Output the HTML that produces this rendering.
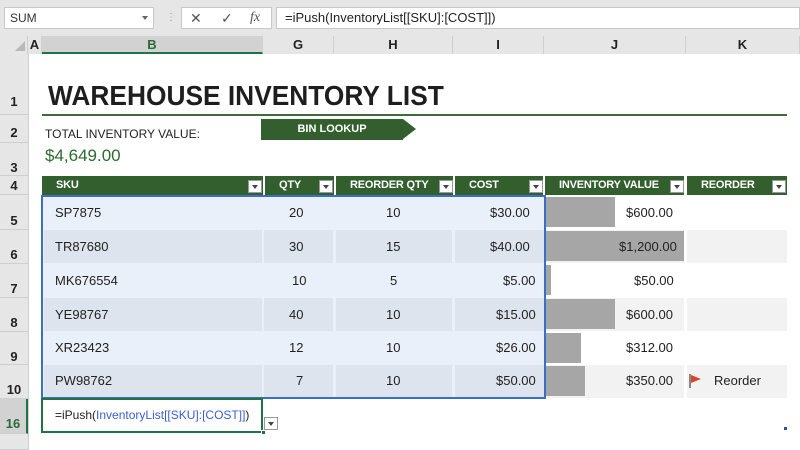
<!DOCTYPE html><html><head><style>
*{margin:0;padding:0;box-sizing:border-box}
body{width:800px;height:450px;overflow:hidden;background:#fff;font-family:"Liberation Sans",Arial,sans-serif;position:relative}
div{position:absolute}
.t{font-size:13px;color:#222;line-height:34px;white-space:nowrap}
.rh{left:0;width:28px;background:#e6e6e6;border-bottom:1px solid #cfcfcf;font-size:13px;color:#222;text-align:center;font-weight:bold}
.ch{top:36px;height:18px;background:#e6e6e6;border-right:1px solid #cfcfcf;font-size:13px;font-weight:bold;color:#222;text-align:center;line-height:18px}
.hd{top:176px;height:19px;background:#335f2e;color:#fff;font-size:11px;letter-spacing:-0.2px;font-weight:bold;line-height:19px;padding-left:14px;white-space:nowrap}
.dd{top:180px;width:14px;height:13px;background:#fff;border:1px solid #999}
.dd:after{content:"";position:absolute;left:3px;top:4px;border-left:3px solid transparent;border-right:3px solid transparent;border-top:4px solid #444}
.bar{background:#a6a6a6;left:545px}
</style></head><body>
<div style="left:0;top:0;width:800px;height:36px;background:#e6e6e6"></div>
<div style="left:4px;top:7px;width:150px;height:22px;background:#fff;border:1px solid #c8c8c8;font-size:12px;line-height:20px;padding-left:5px;color:#333">SUM</div>
<div style="left:142px;top:16px;border-left:3px solid transparent;border-right:3px solid transparent;border-top:4px solid #666"></div>
<div style="left:166px;top:12px;color:#999;font-size:10px">⋮</div>
<div style="left:181px;top:7px;width:91px;height:22px;background:#fff;border:1px solid #c8c8c8;font-size:14px;color:#555;line-height:20px"><span style="position:absolute;left:8px">✕</span><span style="position:absolute;left:39px">✓</span><span style="position:absolute;left:68px;font-style:italic;font-family:'Liberation Serif',serif">fx</span></div>
<div style="left:276px;top:7px;width:524px;height:22px;background:#fff;border:1px solid #c8c8c8;font-size:13px;line-height:20px;padding-left:8px;color:#222">=iPush(InventoryList[[SKU]:[COST]])</div>
<div style="left:0;top:36px;width:28px;height:18px;background:#e6e6e6;border-right:1px solid #cfcfcf"></div>
<div style="left:15px;top:41px;border-left:10px solid transparent;border-bottom:10px solid #b8b8b8"></div>
<div class="ch" style="left:28px;width:14px">A</div>
<div class="ch" style="left:42px;width:221px;background:#d2d2d2;color:#2a6a3a;border-bottom:2px solid #217346">B</div>
<div class="ch" style="left:263px;width:71px">G</div>
<div class="ch" style="left:334px;width:119px">H</div>
<div class="ch" style="left:453px;width:91px">I</div>
<div class="ch" style="left:544px;width:142px">J</div>
<div class="ch" style="left:686px;width:114px">K</div>
<div style="left:28px;top:54px;width:1px;height:396px;background:#cfcfcf"></div>
<div class="rh" style="top:54px;height:61px;line-height:96px">1</div>
<div class="rh" style="top:115px;height:28px;line-height:36px">2</div>
<div class="rh" style="top:143px;height:33px;line-height:50px">3</div>
<div class="rh" style="top:176px;height:19px;line-height:20px">4</div>
<div class="rh" style="top:195px;height:35px;line-height:52px">5</div>
<div class="rh" style="top:230px;height:34px;line-height:50px">6</div>
<div class="rh" style="top:264px;height:34px;line-height:50px">7</div>
<div class="rh" style="top:298px;height:34px;line-height:50px">8</div>
<div class="rh" style="top:332px;height:33px;line-height:50px">9</div>
<div class="rh" style="top:365px;height:34px;line-height:50px">10</div>
<div class="rh" style="top:399px;height:35px;line-height:50px;background:#d2d2d2;color:#2a6a3a;border-right:2px solid #217346">16</div>
<div class="rh" style="top:434px;height:16px"></div>
<div style="left:48px;top:80px;font-size:28px;font-weight:bold;color:#1e1e1e;white-space:nowrap;transform:scaleX(0.94);transform-origin:left top">WAREHOUSE INVENTORY LIST</div>
<div style="left:42px;top:114px;width:745px;height:2px;background:#3f6b3a"></div>
<div style="left:45px;top:127px;font-size:12px;color:#222">TOTAL INVENTORY VALUE:</div>
<div style="left:45px;top:146px;font-size:17px;color:#2d6a2e">$4,649.00</div>
<div style="left:261px;top:119px;width:142px;height:21px;background:#335f2e;color:#fff;font-size:11px;font-weight:bold;line-height:21px;text-align:center">BIN LOOKUP</div>
<div style="left:403px;top:119px;border-top:10.5px solid transparent;border-bottom:10.5px solid transparent;border-left:13px solid #335f2e"></div>
<div class="hd" style="left:42px;width:221px">SKU</div><div class="dd" style="left:248px"></div>
<div class="hd" style="left:265px;width:69px">QTY</div><div class="dd" style="left:319px"></div>
<div class="hd" style="left:336px;width:117px">REORDER QTY</div><div class="dd" style="left:439px"></div>
<div class="hd" style="left:455px;width:88px">COST</div><div class="dd" style="left:529px"></div>
<div class="hd" style="left:545px;width:139px">INVENTORY VALUE</div><div class="dd" style="left:670px"></div>
<div class="hd" style="left:687px;width:100px">REORDER</div><div class="dd" style="left:772px"></div>
<div style="left:42px;top:196px;width:503px;height:203px;background:#eaf0f9"></div>
<div style="left:44px;top:230px;width:218px;height:33px;background:#dde4ee"></div><div style="left:264px;top:230px;width:69px;height:33px;background:#dde4ee"></div><div style="left:336px;top:230px;width:116px;height:33px;background:#dde4ee"></div><div style="left:455px;top:230px;width:89px;height:33px;background:#dde4ee"></div>
<div style="left:44px;top:298px;width:218px;height:33px;background:#dde4ee"></div><div style="left:264px;top:298px;width:69px;height:33px;background:#dde4ee"></div><div style="left:336px;top:298px;width:116px;height:33px;background:#dde4ee"></div><div style="left:455px;top:298px;width:89px;height:33px;background:#dde4ee"></div>
<div style="left:44px;top:365px;width:218px;height:33px;background:#dde4ee"></div><div style="left:264px;top:365px;width:69px;height:33px;background:#dde4ee"></div><div style="left:336px;top:365px;width:116px;height:33px;background:#dde4ee"></div><div style="left:455px;top:365px;width:89px;height:33px;background:#dde4ee"></div>
<div style="left:545px;top:230px;width:139px;height:33px;background:#f2f2f2"></div><div style="left:687px;top:230px;width:100px;height:33px;background:#f2f2f2"></div>
<div style="left:545px;top:298px;width:139px;height:33px;background:#f2f2f2"></div><div style="left:687px;top:298px;width:100px;height:33px;background:#f2f2f2"></div>
<div style="left:545px;top:365px;width:139px;height:33px;background:#f2f2f2"></div><div style="left:687px;top:365px;width:100px;height:33px;background:#f2f2f2"></div>
<div class="bar" style="top:197px;width:70px;height:30px"></div>
<div class="bar" style="top:231px;width:139px;height:30px"></div>
<div class="bar" style="top:265px;width:6px;height:30px"></div>
<div class="bar" style="top:299px;width:70px;height:30px"></div>
<div class="bar" style="top:333px;width:36px;height:30px"></div>
<div class="bar" style="top:366px;width:40px;height:30px"></div>
<div style="left:41px;top:195px;width:505px;height:204px;border:2px solid #3a6fc6"></div>
<div class="t" style="left:55px;top:196px">SP7875</div><div class="t" style="left:289px;top:196px">20</div><div class="t" style="left:386px;top:196px">10</div><div class="t" style="left:490px;top:196px">$30.00</div><div class="t" style="left:626px;top:196px">$600.00</div>
<div class="t" style="left:55px;top:230px">TR87680</div><div class="t" style="left:289px;top:230px">30</div><div class="t" style="left:386px;top:230px">15</div><div class="t" style="left:490px;top:230px">$40.00</div><div class="t" style="left:619px;top:230px">$1,200.00</div>
<div class="t" style="left:55px;top:264px">MK676554</div><div class="t" style="left:292px;top:264px">10</div><div class="t" style="left:390px;top:264px">5</div><div class="t" style="left:503px;top:264px">$5.00</div><div class="t" style="left:634px;top:264px">$50.00</div>
<div class="t" style="left:55px;top:298px">YE98767</div><div class="t" style="left:289px;top:298px">40</div><div class="t" style="left:386px;top:298px">10</div><div class="t" style="left:496px;top:298px">$15.00</div><div class="t" style="left:626px;top:298px">$600.00</div>
<div class="t" style="left:55px;top:331px">XR23423</div><div class="t" style="left:289px;top:331px">12</div><div class="t" style="left:386px;top:331px">10</div><div class="t" style="left:496px;top:331px">$26.00</div><div class="t" style="left:626px;top:331px">$312.00</div>
<div class="t" style="left:55px;top:364px">PW98762</div><div class="t" style="left:296px;top:364px">7</div><div class="t" style="left:386px;top:364px">10</div><div class="t" style="left:496px;top:364px">$50.00</div><div class="t" style="left:626px;top:364px">$350.00</div>
<div style="left:689px;top:374px;width:2px;height:14px;background:#888"></div>
<div style="left:691px;top:375px;border-top:4px solid transparent;border-bottom:4px solid transparent;border-left:10px solid #d9442b"></div>
<div class="t" style="left:714px;top:364px">Reorder</div>
<div style="left:41px;top:398px;width:222px;height:35px;border:2px solid #217346;background:#fff"></div>
<div style="left:261px;top:430px;width:5px;height:5px;background:#217346;border:1px solid #fff"></div>
<div class="t" style="left:55px;top:398px;font-size:12px">=iPush(<span style="color:#3a5fcd">InventoryList[[SKU]:[COST]]</span>)</div>
<div class="dd" style="left:264px;top:417px"></div>
<div style="left:784px;top:427px;width:3px;height:3px;background:#2b4fa8"></div>
</body></html>
